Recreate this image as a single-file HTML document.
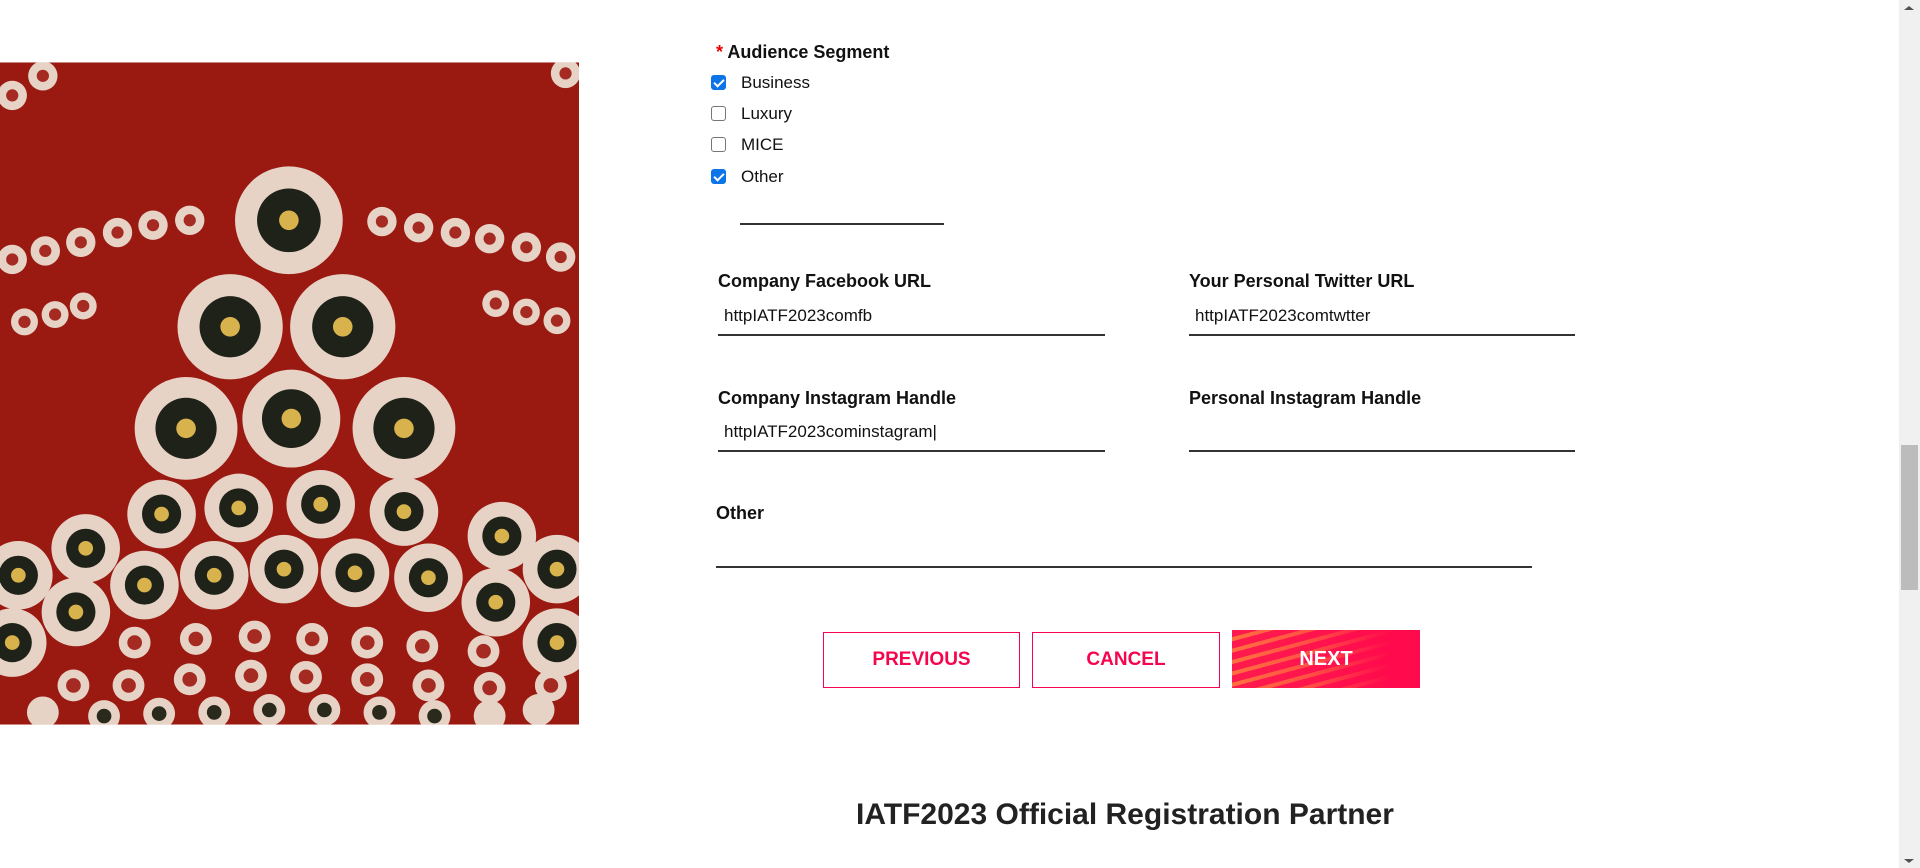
<!DOCTYPE html>
<html><head><meta charset="utf-8"><style>
*{margin:0;padding:0;box-sizing:border-box}
html,body{width:1920px;height:868px;overflow:hidden;background:#fff;font-family:"Liberation Sans",sans-serif;color:#111}
.a{position:absolute}
.lbl{font-weight:bold;font-size:18px}
.cb{position:absolute;width:15px;height:15px;border-radius:3px;border:1.5px solid #767676;background:#fff}
.cb.on{background:#0b75e8;border-color:#0b75e8}
.cb.on:after{content:"";position:absolute;left:4px;top:1px;width:4px;height:8px;border:solid #fff;border-width:0 2px 2px 0;transform:rotate(45deg)}
.opt{font-size:17px}
.line{position:absolute;height:1.5px;background:#333}
.val{font-size:17px}
.btn{position:absolute;border:1.5px solid #f5054f;color:#f5054f;font-weight:bold;font-size:19px;display:flex;align-items:center;justify-content:center;background:#fff}
svg{overflow:hidden}
</style></head><body>
<svg class="a" style="left:0;top:62px" width="579" height="663" viewBox="0 51 473 541">
<clipPath id="c"><rect x="0" y="51" width="473" height="541"/></clipPath>
<g clip-path="url(#c)">
<rect x="0" y="51" width="473" height="541" fill="#9a1a12"/>
<g fill="#e6d3c6">
<circle cx="236" cy="180" r="44"/><circle cx="188" cy="267" r="43"/><circle cx="280" cy="267" r="43"/>
<circle cx="152" cy="350" r="42"/><circle cx="238" cy="342" r="40"/><circle cx="330" cy="350" r="42"/>
<circle cx="132" cy="420" r="28"/><circle cx="195" cy="415" r="28"/><circle cx="262" cy="412" r="28"/><circle cx="330" cy="418" r="28"/><circle cx="410" cy="438" r="28"/>
<circle cx="70" cy="448" r="28"/><circle cx="15" cy="470" r="28"/><circle cx="118" cy="478" r="28"/><circle cx="175" cy="470" r="28"/><circle cx="232" cy="465" r="28"/><circle cx="290" cy="468" r="28"/><circle cx="350" cy="472" r="28"/><circle cx="405" cy="492" r="28"/><circle cx="455" cy="465" r="28"/>
<circle cx="62" cy="500" r="28"/><circle cx="10" cy="525" r="28"/><circle cx="455" cy="525" r="28"/>
</g>
<g fill="#1f2218">
<circle cx="236" cy="180" r="26"/><circle cx="188" cy="267" r="25"/><circle cx="280" cy="267" r="25"/>
<circle cx="152" cy="350" r="25"/><circle cx="238" cy="342" r="24"/><circle cx="330" cy="350" r="25"/>
<circle cx="132" cy="420" r="16"/><circle cx="195" cy="415" r="16"/><circle cx="262" cy="412" r="16"/><circle cx="330" cy="418" r="16"/><circle cx="410" cy="438" r="16"/>
<circle cx="70" cy="448" r="16"/><circle cx="15" cy="470" r="16"/><circle cx="118" cy="478" r="16"/><circle cx="175" cy="470" r="16"/><circle cx="232" cy="465" r="16"/><circle cx="290" cy="468" r="16"/><circle cx="350" cy="472" r="16"/><circle cx="405" cy="492" r="16"/><circle cx="455" cy="465" r="16"/>
<circle cx="62" cy="500" r="16"/><circle cx="10" cy="525" r="16"/><circle cx="455" cy="525" r="16"/>
</g>
<g fill="#d8b24c">
<circle cx="236" cy="180" r="8"/><circle cx="188" cy="267" r="8"/><circle cx="280" cy="267" r="8"/>
<circle cx="152" cy="350" r="8"/><circle cx="238" cy="342" r="8"/><circle cx="330" cy="350" r="8"/>
<circle cx="132" cy="420" r="6"/><circle cx="195" cy="415" r="6"/><circle cx="262" cy="412" r="6"/><circle cx="330" cy="418" r="6"/><circle cx="410" cy="438" r="6"/>
<circle cx="70" cy="448" r="6"/><circle cx="15" cy="470" r="6"/><circle cx="118" cy="478" r="6"/><circle cx="175" cy="470" r="6"/><circle cx="232" cy="465" r="6"/><circle cx="290" cy="468" r="6"/><circle cx="350" cy="472" r="6"/><circle cx="405" cy="492" r="6"/><circle cx="455" cy="465" r="6"/>
<circle cx="62" cy="500" r="6"/><circle cx="10" cy="525" r="6"/><circle cx="455" cy="525" r="6"/>
</g>
<g fill="#e6d3c6">
<circle cx="10" cy="212" r="12"/><circle cx="37" cy="205" r="12"/><circle cx="66" cy="198" r="12"/><circle cx="96" cy="190" r="12"/><circle cx="125" cy="184" r="12"/><circle cx="155" cy="180" r="12"/>
<circle cx="312" cy="181" r="12"/><circle cx="342" cy="186" r="12"/><circle cx="372" cy="190" r="12"/><circle cx="400" cy="195" r="12"/><circle cx="430" cy="202" r="12"/><circle cx="458" cy="210" r="12"/>
<circle cx="20" cy="263" r="11"/><circle cx="45" cy="257" r="11"/><circle cx="68" cy="250" r="11"/><circle cx="405" cy="248" r="11"/><circle cx="430" cy="255" r="11"/><circle cx="455" cy="262" r="11"/>
<circle cx="10" cy="78" r="12"/><circle cx="35" cy="62" r="12"/><circle cx="462" cy="60" r="12"/>
<circle cx="110" cy="525" r="13"/><circle cx="160" cy="522" r="13"/><circle cx="208" cy="520" r="13"/><circle cx="255" cy="522" r="13"/><circle cx="300" cy="525" r="13"/><circle cx="345" cy="528" r="13"/><circle cx="395" cy="532" r="13"/>
<circle cx="60" cy="560" r="13"/><circle cx="105" cy="560" r="13"/><circle cx="155" cy="555" r="13"/><circle cx="205" cy="552" r="13"/><circle cx="250" cy="553" r="13"/><circle cx="300" cy="555" r="13"/><circle cx="350" cy="560" r="13"/><circle cx="400" cy="562" r="13"/><circle cx="450" cy="560" r="13"/>
<circle cx="35" cy="582" r="13"/><circle cx="85" cy="585" r="13"/><circle cx="130" cy="583" r="13"/><circle cx="175" cy="582" r="13"/><circle cx="220" cy="580" r="13"/><circle cx="265" cy="580" r="13"/><circle cx="310" cy="582" r="13"/><circle cx="355" cy="585" r="13"/><circle cx="400" cy="585" r="13"/><circle cx="440" cy="580" r="13"/>
</g>
<g fill="#a52a22">
<circle cx="10" cy="212" r="5"/><circle cx="37" cy="205" r="5"/><circle cx="66" cy="198" r="5"/><circle cx="96" cy="190" r="5"/><circle cx="125" cy="184" r="5"/><circle cx="155" cy="180" r="5"/>
<circle cx="312" cy="181" r="5"/><circle cx="342" cy="186" r="5"/><circle cx="372" cy="190" r="5"/><circle cx="400" cy="195" r="5"/><circle cx="430" cy="202" r="5"/><circle cx="458" cy="210" r="5"/>
<circle cx="20" cy="263" r="5"/><circle cx="45" cy="257" r="5"/><circle cx="68" cy="250" r="5"/><circle cx="405" cy="248" r="5"/><circle cx="430" cy="255" r="5"/><circle cx="455" cy="262" r="5"/>
<circle cx="10" cy="78" r="5"/><circle cx="35" cy="62" r="5"/><circle cx="462" cy="60" r="5"/>
<circle cx="110" cy="525" r="6"/><circle cx="160" cy="522" r="6"/><circle cx="208" cy="520" r="6"/><circle cx="255" cy="522" r="6"/><circle cx="300" cy="525" r="6"/><circle cx="345" cy="528" r="6"/><circle cx="395" cy="532" r="6"/>
<circle cx="60" cy="560" r="6"/><circle cx="105" cy="560" r="6"/><circle cx="155" cy="555" r="6"/><circle cx="205" cy="552" r="6"/><circle cx="250" cy="553" r="6"/><circle cx="300" cy="555" r="6"/><circle cx="350" cy="560" r="6"/><circle cx="400" cy="562" r="6"/><circle cx="450" cy="560" r="6"/>
</g>
<g fill="#2a2a1c"><circle cx="85" cy="585" r="6"/><circle cx="130" cy="583" r="6"/><circle cx="175" cy="582" r="6"/><circle cx="220" cy="580" r="6"/><circle cx="265" cy="580" r="6"/><circle cx="310" cy="582" r="6"/><circle cx="355" cy="585" r="6"/></g>
</g>
</svg>

<div class="a lbl" style="left:716px;top:42px"><span style="color:#e00">*</span> Audience Segment</div>
<div class="cb on" style="left:711px;top:75px"></div><div class="a opt" style="left:741px;top:73px">Business</div>
<div class="cb" style="left:711px;top:106px"></div><div class="a opt" style="left:741px;top:104px">Luxury</div>
<div class="cb" style="left:711px;top:137px"></div><div class="a opt" style="left:741px;top:135px">MICE</div>
<div class="cb on" style="left:711px;top:169px"></div><div class="a opt" style="left:741px;top:167px">Other</div>
<div class="line" style="left:740px;top:223px;width:204px"></div>

<div class="a lbl" style="left:718px;top:271px">Company Facebook URL</div>
<div class="a val" style="left:724px;top:306px">httpIATF2023comfb</div>
<div class="line" style="left:718px;top:334px;width:387px"></div>
<div class="a lbl" style="left:1189px;top:271px">Your Personal Twitter URL</div>
<div class="a val" style="left:1195px;top:306px">httpIATF2023comtwtter</div>
<div class="line" style="left:1189px;top:334px;width:386px"></div>

<div class="a lbl" style="left:718px;top:388px">Company Instagram Handle</div>
<div class="a val" style="left:724px;top:422px">httpIATF2023cominstagram|</div>
<div class="line" style="left:718px;top:450px;width:387px"></div>
<div class="a lbl" style="left:1189px;top:388px">Personal Instagram Handle</div>
<div class="line" style="left:1189px;top:450px;width:386px"></div>

<div class="a lbl" style="left:716px;top:503px">Other</div>
<div class="line" style="left:716px;top:566px;width:816px"></div>

<div class="btn" style="left:823px;top:632px;width:197px;height:56px">PREVIOUS</div>
<div class="btn" style="left:1032px;top:632px;width:188px;height:56px">CANCEL</div>
<div class="btn" style="left:1232px;top:630px;width:188px;height:58px;border:none;color:#fff;font-size:20px;background-image:linear-gradient(90deg,rgba(255,10,77,0) 0%,rgba(255,10,77,.3) 40%,#ff0a4d 85%),repeating-linear-gradient(165deg,#ff1a4d 0 7px,#ff7040 7px 11px)">NEXT</div>

<div class="a" style="left:856px;top:798px;font-size:30px;font-weight:bold;color:#222">IATF2023 Official Registration Partner</div>

<div class="a" style="left:1899px;top:0;width:21px;height:868px;background:#f0f0f0"></div>
<div class="a" style="left:1901px;top:445px;width:17px;height:145px;background:#bcbcbc"></div>
<div class="a" style="left:1904px;top:6px;width:0;height:0;border:5px solid transparent;border-bottom:4px solid #505050;border-top:0"></div>
<div class="a" style="left:1904px;top:859px;width:0;height:0;border:5px solid transparent;border-top:4px solid #505050;border-bottom:0"></div>
</body></html>
